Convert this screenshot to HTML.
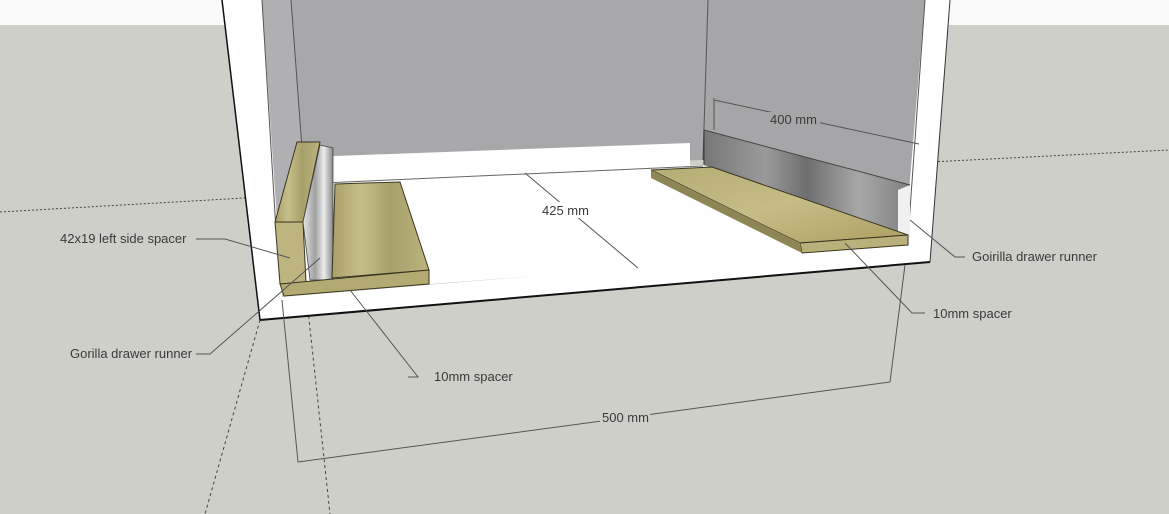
<!DOCTYPE html>
<html><head><meta charset="utf-8"><style>
html,body{margin:0;padding:0;width:1169px;height:514px;overflow:hidden;background:#cfcfc9}
svg{display:block}
text{font-family:"Liberation Sans Narrow","Liberation Sans",sans-serif;font-stretch:condensed;font-size:13px;fill:#3a3a3a}
</style></head><body>
<svg width="1169" height="514" viewBox="0 0 1169 514">
<defs>
<linearGradient id="wood" x1="0" y1="0" x2="1" y2="0">
<stop offset="0" stop-color="#a99f68"/><stop offset=".3" stop-color="#c7bf8a"/><stop offset=".6" stop-color="#a8a06a"/><stop offset="1" stop-color="#bcb47f"/>
</linearGradient>
<linearGradient id="woodr" x1="0" y1="0" x2="1" y2="1">
<stop offset="0" stop-color="#b5ac74"/><stop offset=".5" stop-color="#c6bd86"/><stop offset="1" stop-color="#ad9f62"/>
</linearGradient>
<linearGradient id="metal" x1="0" y1="0" x2="1" y2="0">
<stop offset="0" stop-color="#777"/><stop offset=".3" stop-color="#9a9a9a"/><stop offset=".5" stop-color="#6e6e6e"/><stop offset=".75" stop-color="#a8a8a8"/><stop offset="1" stop-color="#808080"/>
</linearGradient>
<linearGradient id="metalL" x1="0" y1="0" x2="1" y2="0">
<stop offset="0" stop-color="#e6e6e6"/><stop offset=".4" stop-color="#a0a0a0"/><stop offset=".7" stop-color="#ececec"/><stop offset="1" stop-color="#888"/>
</linearGradient>
</defs>
<rect x="0" y="0" width="1169" height="25" fill="#fafafa"/>
<rect x="0" y="25" width="1169" height="489" fill="#cfcfc9"/>
<polyline points="0,212 262,197" fill="none" stroke="#444" stroke-dasharray="2,2"/>
<polyline points="930,162 1169,150" fill="none" stroke="#444" stroke-dasharray="2,2"/>
<polyline points="260,320 205,514" fill="none" stroke="#444" stroke-dasharray="3,3"/>
<polyline points="308,310 330,514" fill="none" stroke="#444" stroke-dasharray="3,3"/>
<!-- back wall -->
<polygon points="291,0 708,0 703,160 304,175" fill="#a8a8aa"/>
<!-- left inner wall -->
<polygon points="262,0 291,0 304,175 300,290 282,290" fill="#b0b0b2"/>
<!-- right inner wall -->
<polygon points="708,0 925,0 905,240 703,160" fill="#a6a6a8"/>
<polygon points="308,157 690,143 690,168 308,182" fill="#fff"/>
<polygon points="300,182 703,165 910,240 905,248 285,295" fill="#fff"/>
<line x1="300" y1="184" x2="703" y2="166" stroke="#666"/>
<!-- left panel -->
<polygon points="222,0 262,0 282,297 260,320" fill="#fff"/>
<line x1="222" y1="0" x2="260" y2="320" stroke="#111" stroke-width="1.5"/>
<line x1="262" y1="0" x2="276" y2="230" stroke="#555"/>
<line x1="291" y1="0" x2="304" y2="175" stroke="#555"/>
<line x1="708" y1="0" x2="703" y2="160" stroke="#555"/>
<!-- right panel -->
<polygon points="925,0 950,0 930,262 908,265 905,240" fill="#fff"/>
<line x1="950" y1="0" x2="930" y2="262" stroke="#333"/>
<line x1="925" y1="0" x2="908" y2="238" stroke="#555"/>
<polygon points="282,297 910,245 930,262 260,320" fill="#fff"/>
<line x1="260" y1="320" x2="930" y2="262" stroke="#111" stroke-width="2"/>
<!-- right runner -->
<polygon points="704,130 910,185 898,190 898,238 704,165" fill="url(#metal)"/>
<polygon points="898,190 910,185 910,237 898,238" fill="#f0f0f0"/>
<line x1="704" y1="130" x2="910" y2="185" stroke="#444"/>
<line x1="704" y1="130" x2="704" y2="165" stroke="#333"/>
<polygon points="651,170 712,167 908,235 800,243" fill="url(#woodr)" stroke="#3a3520"/>
<polygon points="800,243 908,235 908,245 802,253" fill="#b9b07a" stroke="#3a3520"/>
<polygon points="651,170 800,243 802,253 651,178" fill="#8f8655"/>
<!-- left spacers -->
<polygon points="297,142 320,142 303,222 275,222" fill="url(#wood)" stroke="#3a3520"/>
<polygon points="275,222 303,222 306,282 280,284" fill="#bdb47f" stroke="#3a3520"/>
<polygon points="320,145 333,148 333,280 310,280 303,222" fill="url(#metalL)" stroke="#444" stroke-width=".8"/>
<polygon points="335,184 400,182 429,270 332,278" fill="url(#wood)" stroke="#3a3520"/>
<polygon points="280,284 429,270 429,284 284,296" fill="#b3aa72" stroke="#3a3520"/>
<g stroke="#555" stroke-width="1" fill="none">
<line x1="714" y1="100" x2="919" y2="144"/>
<line x1="714" y1="98" x2="714" y2="130"/>
<line x1="525" y1="173" x2="638" y2="268"/>
<line x1="298" y1="462" x2="890" y2="382"/>
<line x1="298" y1="462" x2="282" y2="300"/>
<line x1="890" y1="382" x2="905" y2="265"/>
<polyline points="196,239 225,239 290,258"/>
<polyline points="196,354 210,354 320,258"/>
<polyline points="408,377 418,377 350,290"/>
<polyline points="965,257 955,257 910,220"/>
<polyline points="925,313 912,313 845,243"/>
</g>
<rect x="768" y="112" width="52" height="16" fill="#a6a6a8"/>
<rect x="540" y="202" width="50" height="16" fill="#fff"/>
<rect x="600" y="409" width="50" height="16" fill="#cfcfc9"/>
<text x="770" y="124">400 mm</text>
<text x="542" y="215">425 mm</text>
<text x="602" y="422">500 mm</text>
<text x="60" y="243">42x19 left side spacer</text>
<text x="70" y="358">Gorilla drawer runner</text>
<text x="434" y="381">10mm spacer</text>
<text x="972" y="261">Goirilla drawer runner</text>
<text x="933" y="318">10mm spacer</text>
</svg>
</body></html>
